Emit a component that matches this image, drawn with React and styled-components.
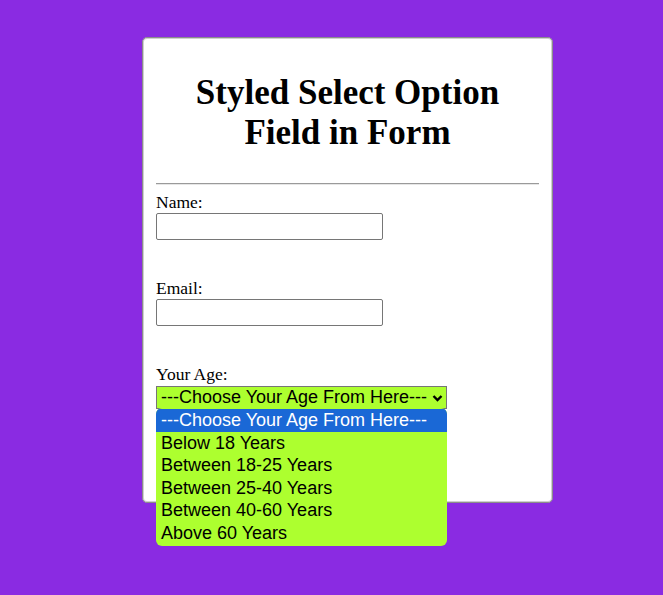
import React from 'react';
import styled, { createGlobalStyle } from 'styled-components';

const GlobalStyle = createGlobalStyle`
  html, body {
    margin: 0;
    background: #8a2be2;
    font-family: "Liberation Serif", "Times New Roman", serif;
  }
`;

const Page = styled.div`
  min-height: 595px;
  padding: 37px 0 0 142px;
  box-sizing: border-box;
`;

const Card = styled.div`
  width: 411px;
  height: 466px;
  box-sizing: border-box;
  background: #fff;
  border: 1px solid #8c8c8c;
  border-radius: 5px;
  box-shadow: inset 0 0 0 1px #d0d0d0;
  padding: 12px 13px;
`;

const Title = styled.h1`
  margin: 23px 0 0;
  text-align: center;
  font-size: 35px;
  line-height: 40px;
  font-weight: bold;
  color: #000;
`;

const Rule = styled.hr`
  margin: 30px 0 8px;
  border: none;
  border-top: 1px solid #9a9a9a;
  border-bottom: 1px solid #e6e6e6;
`;

const Field = styled.div`
  display: flex;
  flex-direction: column;
  align-items: flex-start;
  margin-bottom: ${p => p.gap || 0}px;
  position: relative;
`;

const Label = styled.label`
  font-size: 17.5px;
  line-height: 19px;
  color: #000;
`;

const TextInput = styled.input`
  width: 227px;
  height: 27px;
  box-sizing: border-box;
  border: 1px solid #767676;
  border-radius: 2px;
  margin: 1px 0 0;
`;

const SelectBox = styled.div`
  margin-top: 2px;
  width: 291px;
  height: 23px;
  box-sizing: border-box;
  background: #adff2f;
  border: 1px solid #767676;
  display: flex;
  align-items: center;
  justify-content: space-between;
  padding: 0 3px 0 4px;
  font-family: "Liberation Sans", Arial, sans-serif;
  font-size: 18px;
  color: #000;
`;

const Menu = styled.ul`
  position: absolute;
  top: 43px;
  left: 0;
  width: 291px;
  margin: 0;
  padding: 1px 0 2px;
  list-style: none;
  background: #adff2f;
  border-radius: 6px;
  overflow: hidden;
  font-family: "Liberation Sans", Arial, sans-serif;
  font-size: 18px;
  z-index: 2;
`;

const Option = styled.li`
  height: 22.5px;
  line-height: 22.5px;
  padding: 0 5px;
  color: ${p => (p.active ? '#fff' : '#000')};
  background: ${p => (p.active ? '#1a68d6' : 'transparent')};
`;

const options = [
  '---Choose Your Age From Here---',
  'Below 18 Years',
  'Between 18-25 Years',
  'Between 25-40 Years',
  'Between 40-60 Years',
  'Above 60 Years'
];

const Chevron = () => (
  <svg width="11" height="9" viewBox="0 0 11 9">
    <path d="M1.5 3 L5.5 7 L9.5 3" fill="none" stroke="#000" strokeWidth="2.4" />
  </svg>
);

export default function App() {
  return (
    <Page>
      <GlobalStyle />
      <Card>
        <Title>
          Styled Select Option
          <br />
          Field in Form
        </Title>
        <Rule />
        <Field gap={39}>
          <Label htmlFor="name">Name:</Label>
          <TextInput id="name" type="text" />
        </Field>
        <Field gap={39}>
          <Label htmlFor="email">Email:</Label>
          <TextInput id="email" type="email" />
        </Field>
        <Field>
          <Label>Your Age:</Label>
          <SelectBox>
            <span>{options[0]}</span>
            <Chevron />
          </SelectBox>
          <Menu>
            {options.map((o, i) => (
              <Option key={o} active={i === 0}>
                {o}
              </Option>
            ))}
          </Menu>
        </Field>
      </Card>
    </Page>
  );
}
